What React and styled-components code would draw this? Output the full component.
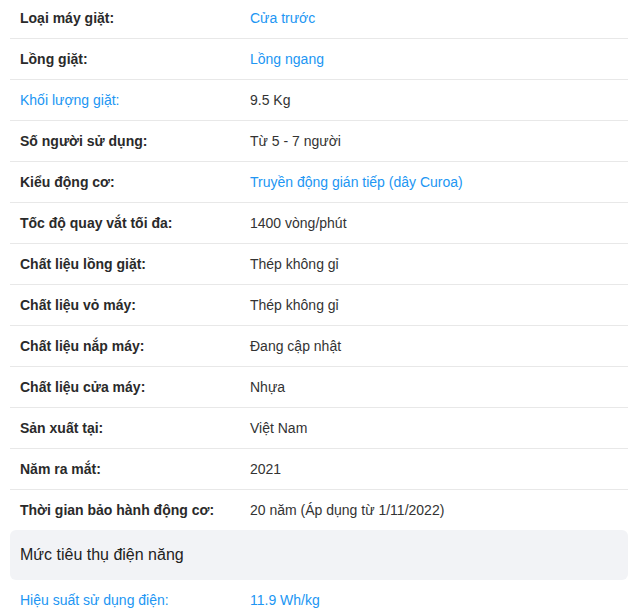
import React from 'react';
import styled, { createGlobalStyle } from 'styled-components';

const GlobalStyle = createGlobalStyle`
  body {
    margin: 0;
    background: #fff;
    font-family: "Liberation Sans", Arial, sans-serif;
  }
`;

const SpecList = styled.div`
  width: 618px;
  margin: -2px 0 0 10px;
`;

const Row = styled.div`
  display: flex;
  align-items: center;
  height: 40px;
  padding-left: 10px;
  border-bottom: ${(p) => (p.last ? 'none' : '1px solid #e8e8e8')};
  font-size: 14px;
`;

const Label = styled.span`
  width: 230px;
  flex-shrink: 0;
  color: ${(p) => (p.link ? '#2196f3' : '#2a2a2a')};
  font-weight: ${(p) => (p.link ? 400 : 700)};
`;

const Value = styled.span`
  color: ${(p) => (p.link ? '#2196f3' : '#333')};
`;

const GroupTitle = styled.div`
  display: flex;
  align-items: center;
  height: 50px;
  padding-left: 10px;
  background: #f2f3f6;
  border-radius: 6px;
  font-size: 16px;
  color: #222;
`;

const specs = [
  { label: 'Loại máy giặt:', value: 'Cửa trước', valueLink: true },
  { label: 'Lồng giặt:', value: 'Lồng ngang', valueLink: true },
  { label: 'Khối lượng giặt:', value: '9.5 Kg', labelLink: true },
  { label: 'Số người sử dụng:', value: 'Từ 5 - 7 người' },
  { label: 'Kiểu động cơ:', value: 'Truyền động gián tiếp (dây Curoa)', valueLink: true },
  { label: 'Tốc độ quay vắt tối đa:', value: '1400 vòng/phút' },
  { label: 'Chất liệu lồng giặt:', value: 'Thép không gỉ' },
  { label: 'Chất liệu vỏ máy:', value: 'Thép không gỉ' },
  { label: 'Chất liệu nắp máy:', value: 'Đang cập nhật' },
  { label: 'Chất liệu cửa máy:', value: 'Nhựa' },
  { label: 'Sản xuất tại:', value: 'Việt Nam' },
  { label: 'Năm ra mắt:', value: '2021' },
  { label: 'Thời gian bảo hành động cơ:', value: '20 năm (Áp dụng từ 1/11/2022)' },
];

export default function App() {
  return (
    <>
      <GlobalStyle />
      <SpecList>
        {specs.map((s, i) => (
          <Row key={s.label} last={i === specs.length - 1}>
            <Label link={s.labelLink}>{s.label}</Label>
            <Value link={s.valueLink}>{s.value}</Value>
          </Row>
        ))}
        <GroupTitle>Mức tiêu thụ điện năng</GroupTitle>
        <Row last>
          <Label link>Hiệu suất sử dụng điện:</Label>
          <Value link>11.9 Wh/kg</Value>
        </Row>
      </SpecList>
    </>
  );
}
